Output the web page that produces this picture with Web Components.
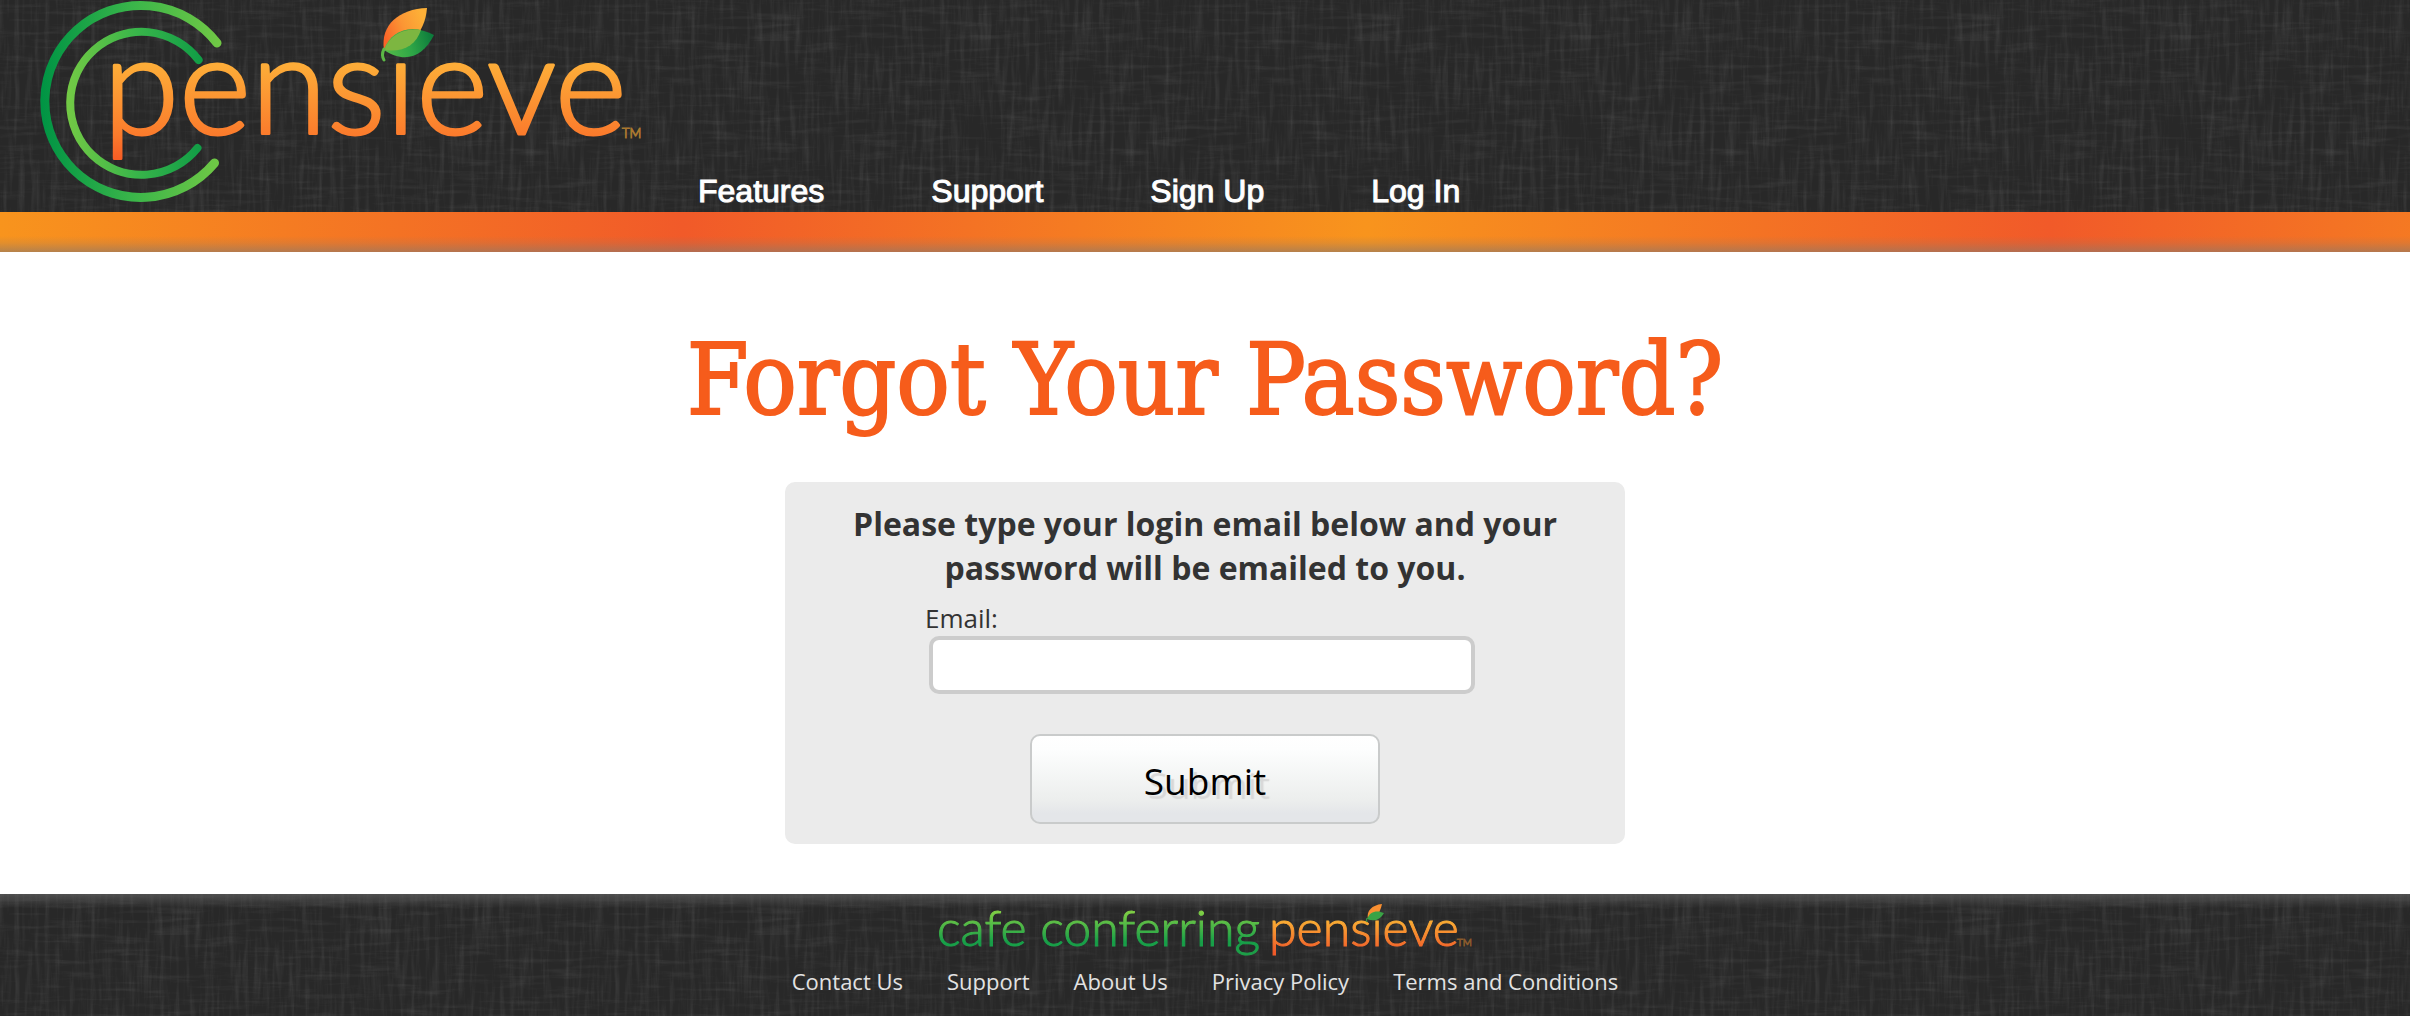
<!DOCTYPE html>
<html lang="en">
<head>
<meta charset="utf-8">
<title>Forgot Your Password? - Pensieve</title>
<meta name="viewport" content="width=device-width, initial-scale=1">
<style>
  html, body { margin: 0; }
  body {
    min-height: 100vh;
    display: flex;
    flex-direction: column;
    background: #fff;
    color: #333;
    font-family: "Open Sans", "Noto Sans", sans-serif;
    --linen: url("data:image/svg+xml,%3Csvg xmlns='http://www.w3.org/2000/svg' width='600' height='600'%3E%3Cfilter id='v' x='0' y='0' width='100%25' height='100%25'%3E%3CfeTurbulence type='fractalNoise' baseFrequency='.2 .018' numOctaves='3' seed='4' stitchTiles='stitch'/%3E%3CfeColorMatrix values='0 0 0 0 .4 0 0 0 0 .4 0 0 0 0 .4 1 0 0 0 -.46'/%3E%3C/filter%3E%3Cfilter id='h' x='0' y='0' width='100%25' height='100%25'%3E%3CfeTurbulence type='fractalNoise' baseFrequency='.02 .2' numOctaves='3' seed='9' stitchTiles='stitch'/%3E%3CfeColorMatrix values='0 0 0 0 .4 0 0 0 0 .4 0 0 0 0 .4 1 0 0 0 -.52'/%3E%3C/filter%3E%3Crect width='600' height='600' fill='%23282828'/%3E%3Crect width='600' height='600' filter='url(%23v)' opacity='.28'/%3E%3Crect width='600' height='600' filter='url(%23h)' opacity='.26'/%3E%3C/svg%3E");
  }
  site-footer { flex: 1 0 auto; }
</style>
</head>
<body>

<site-header>
  <nav-link slot="nav" href="#features">Features</nav-link>
  <nav-link slot="nav" href="#support">Support</nav-link>
  <nav-link slot="nav" href="#signup">Sign Up</nav-link>
  <nav-link slot="nav" href="#login">Log In</nav-link>
</site-header>

<page-main heading="Forgot Your Password?">
  <password-form>Please type your login email below and your password will be emailed to you.</password-form>
</page-main>

<site-footer>
  <footer-link href="#contact">Contact Us</footer-link>
  <footer-link href="#help">Support</footer-link>
  <footer-link href="#about">About Us</footer-link>
  <footer-link href="#privacy">Privacy Policy</footer-link>
  <footer-link href="#terms">Terms and Conditions</footer-link>
</site-footer>

<template id="brand-logo">
  <style>
    :host { display: block; }
    svg { display: block; }
    text { font-family: Lato, sans-serif; font-weight: 300; }
  </style>
  <svg width="644" height="212" viewBox="0 0 644 212" role="img" aria-label="Pensieve">
    <defs>
      <linearGradient id="outer" gradientUnits="userSpaceOnUse" x1="42" y1="0" x2="220" y2="0">
        <stop offset="0" stop-color="#009444"/><stop offset=".5" stop-color="#39b54a"/><stop offset="1" stop-color="#70c845"/>
      </linearGradient>
      <linearGradient id="inner" gradientUnits="userSpaceOnUse" x1="68" y1="0" x2="204" y2="0">
        <stop offset="0" stop-color="#72c945"/><stop offset=".5" stop-color="#39b54a"/><stop offset="1" stop-color="#0f9c46"/>
      </linearGradient>
      <linearGradient id="word" gradientUnits="userSpaceOnUse" x1="0" y1="66" x2="0" y2="158">
        <stop offset="0" stop-color="#fdac38"/><stop offset=".75" stop-color="#fb7b2c"/><stop offset="1" stop-color="#f75e25"/>
      </linearGradient>
      <linearGradient id="petal" gradientUnits="userSpaceOnUse" x1="384" y1="36" x2="424" y2="20">
        <stop offset="0" stop-color="#fb6428"/><stop offset=".5" stop-color="#fb9634"/><stop offset="1" stop-color="#fdb037"/>
      </linearGradient>
      <linearGradient id="leaf" gradientUnits="userSpaceOnUse" x1="388" y1="50" x2="432" y2="38">
        <stop offset="0" stop-color="#4fb848"/><stop offset=".5" stop-color="#2ea647"/><stop offset="1" stop-color="#0d7c3c"/>
      </linearGradient>
    </defs>
    <g fill="none" stroke-linecap="round">
      <path d="M217 43A96 96 0 1 0 214.500 163" stroke="url(#outer)" stroke-width="9"/>
      <path d="M198.600 60A71.500 71.500 0 1 0 197.500 148" stroke="url(#inner)" stroke-width="8"/>
    </g>
    <text x="103" y="134" font-size="138" fill="url(#word)" stroke="url(#word)" stroke-width="3" stroke-linejoin="round">pensieve</text>
    <text x="622" y="138" font-size="13" font-weight="400" fill="#a9782f" stroke="#a9782f" stroke-width="1">TM</text>
    <path d="M427 8C399 9 380 25 384 50C404 52 425 36 427 8Z" fill="url(#petal)"/>
    <path d="M384 50C391 29 413 24 434 35C423 57 405 64 384 50Z" fill="url(#leaf)"/>
    <path d="M384 50C391 33 406 28 421 30C416 45 403 53 384 50Z" fill="#7db641"/>
    <path d="M384 49Q381 55 384 60" fill="none" stroke="#5cb746" stroke-width="3" stroke-linecap="round"/>
  </svg>
</template>

<template id="footer-logo">
  <style>
    :host { display: block; }
    svg { display: block; overflow: visible; }
    text { font-family: Lato, sans-serif; font-weight: 300; }
  </style>
  <svg width="536" height="60" viewBox="0 0 536 60" role="img" aria-label="cafe conferring pensieve">
    <defs>
      <linearGradient id="green" gradientUnits="userSpaceOnUse" x1="0" y1="8" x2="0" y2="48">
        <stop offset="0" stop-color="#7fce45"/><stop offset=".75" stop-color="#169f48"/><stop offset="1" stop-color="#1d9f48"/>
      </linearGradient>
      <linearGradient id="orange" gradientUnits="userSpaceOnUse" x1="0" y1="16" x2="0" y2="48">
        <stop offset="0" stop-color="#fbb034"/><stop offset="1" stop-color="#f15a29"/>
      </linearGradient>
    </defs>
    <text x="0" y="42" font-size="50" fill="url(#green)" stroke="url(#green)" stroke-width="1">cafe conferring</text>
    <text x="332" y="42" font-size="50" fill="url(#orange)" stroke="url(#orange)" stroke-width="1">pensieve</text>
    <text x="520" y="42" font-size="10" fill="#8a5a2c" stroke="#8a5a2c" stroke-width="1">TM</text>
    <path d="M445 0C435 1 429 7 431 15C438 14 443 10 445 0Z" fill="#f98f31"/>
    <path d="M430 15C433 7 440 6 447 9C443 16 437 18 430 15Z" fill="#3aa346"/>
    <path d="M430 14Q429 16 430 18" stroke="#3aa346" stroke-width="1" fill="none"/>
  </svg>
</template>

<template id="site-header">
  <style>
    :host { display: block; }
    .bar { display: flex; align-items: flex-end; min-height: 212px; background: var(--linen); }
    nav { display: flex; flex-wrap: wrap; gap: 0 107px; padding: 0 54px 3px; }
    .stripe {
      height: 40px;
      background:
        linear-gradient(to bottom, transparent 24px, rgba(140,120,105,.2) 31px, rgba(140,120,105,.62) 40px),
        repeating-linear-gradient(to right, #f8941d 0, #f15a29 683px, #f8941d 1366px);
    }
  </style>
  <header>
    <div class="bar">
      <brand-logo></brand-logo>
      <nav><slot name="nav"></slot></nav>
    </div>
    <div class="stripe"></div>
  </header>
</template>

<template id="nav-link">
  <style>
    :host { display: block; }
    a {
      font: 32px/36px "Liberation Sans", Arial, sans-serif;
      color: #fff;
      text-decoration: none;
      text-shadow: 1px 1px 1px #555;
      -webkit-text-stroke: 1px #fff;
      display: block;
    }
  </style>
  <a><slot></slot></a>
</template>

<template id="page-main">
  <style>
    :host { display: block; }
    main { display: flex; flex-direction: column; align-items: center; padding: 68px 16px 50px; }
    h1 {
      margin: 0 0 42px;
      font: 400 99px/120px "DejaVu Serif Condensed", "DejaVu Serif", serif;
      font-stretch: condensed;
      color: #f65c1b;
      -webkit-text-stroke: 2px #f65c1b;
      text-align: center;
    }
  </style>
  <main><h1></h1><slot></slot></main>
</template>

<template id="password-form">
  <style>
    :host { display: block; width: 840px; max-width: 100%; }
    form {
      display: flex; flex-direction: column; align-items: center;
      padding: 20px 40px; background: #ebebeb; border-radius: 10px;
    }
    p { margin: 0 0 10px; font: 700 32px/44px "Open Sans", sans-serif; color: #333; text-align: center; }
    .field { display: flex; flex-direction: column; width: 560px; max-width: 100%; margin-bottom: 40px; }
    label { font-size: 26px; line-height: 36px; color: #333; }
    input {
      box-sizing: border-box; height: 58px; margin: 0 10px 0 4px; padding: 0 12px;
      border: 4px solid #ccc; border-radius: 10px; background: #fff;
      font: 26px "Open Sans", sans-serif; color: #333;
    }
    button {
      box-sizing: border-box; width: 350px; max-width: 100%; height: 90px; padding: 4px 0 0;
      border: 2px solid #c9cbcb; border-radius: 10px;
      background: linear-gradient(#fff, #fdfefe 15%, #eceeed 75%, #e4e6e9 90%);
      font: 37px/52px "Open Sans", sans-serif; color: #000; text-shadow: 4px 4px 1px #d8d8d8;
    }
  </style>
  <form>
    <p><slot></slot></p>
    <div class="field">
      <label for="email">Email:</label>
      <input id="email" name="email" type="email">
    </div>
    <button type="submit">Submit</button>
  </form>
</template>

<template id="site-footer">
  <style>
    :host { display: flex; flex-direction: column; background: linear-gradient(rgba(110,110,110,.55), transparent 14px), var(--linen); }
    footer { display: flex; flex-direction: column; align-items: center; gap: 2px; padding: 10px 16px 14px; }
    nav { display: flex; flex-wrap: wrap; justify-content: center; gap: 0 44px; }
  </style>
  <footer>
    <footer-logo></footer-logo>
    <nav><slot></slot></nav>
  </footer>
</template>

<template id="footer-link">
  <style>
    :host { display: block; }
    a { display: block; font: 22px/30px "Open Sans", sans-serif; color: #e2e2e2; text-decoration: none; }
  </style>
  <a><slot></slot></a>
</template>

<script>
  class TemplateElement extends HTMLElement {
    constructor() {
      super();
      const template = document.getElementById(this.localName);
      this.attachShadow({ mode: "open" }).append(template.content.cloneNode(true));
    }
  }

  class LinkElement extends TemplateElement {
    connectedCallback() {
      this.shadowRoot.querySelector("a").href = this.getAttribute("href") || "#";
    }
  }

  class PageMain extends TemplateElement {
    connectedCallback() {
      this.shadowRoot.querySelector("h1").textContent = this.getAttribute("heading");
    }
  }

  customElements.define("brand-logo", class extends TemplateElement {});
  customElements.define("footer-logo", class extends TemplateElement {});
  customElements.define("nav-link", class extends LinkElement {});
  customElements.define("footer-link", class extends LinkElement {});
  customElements.define("site-header", class extends TemplateElement {});
  customElements.define("page-main", PageMain);
  customElements.define("password-form", class extends TemplateElement {});
  customElements.define("site-footer", class extends TemplateElement {});
</script>
</body>
</html>
